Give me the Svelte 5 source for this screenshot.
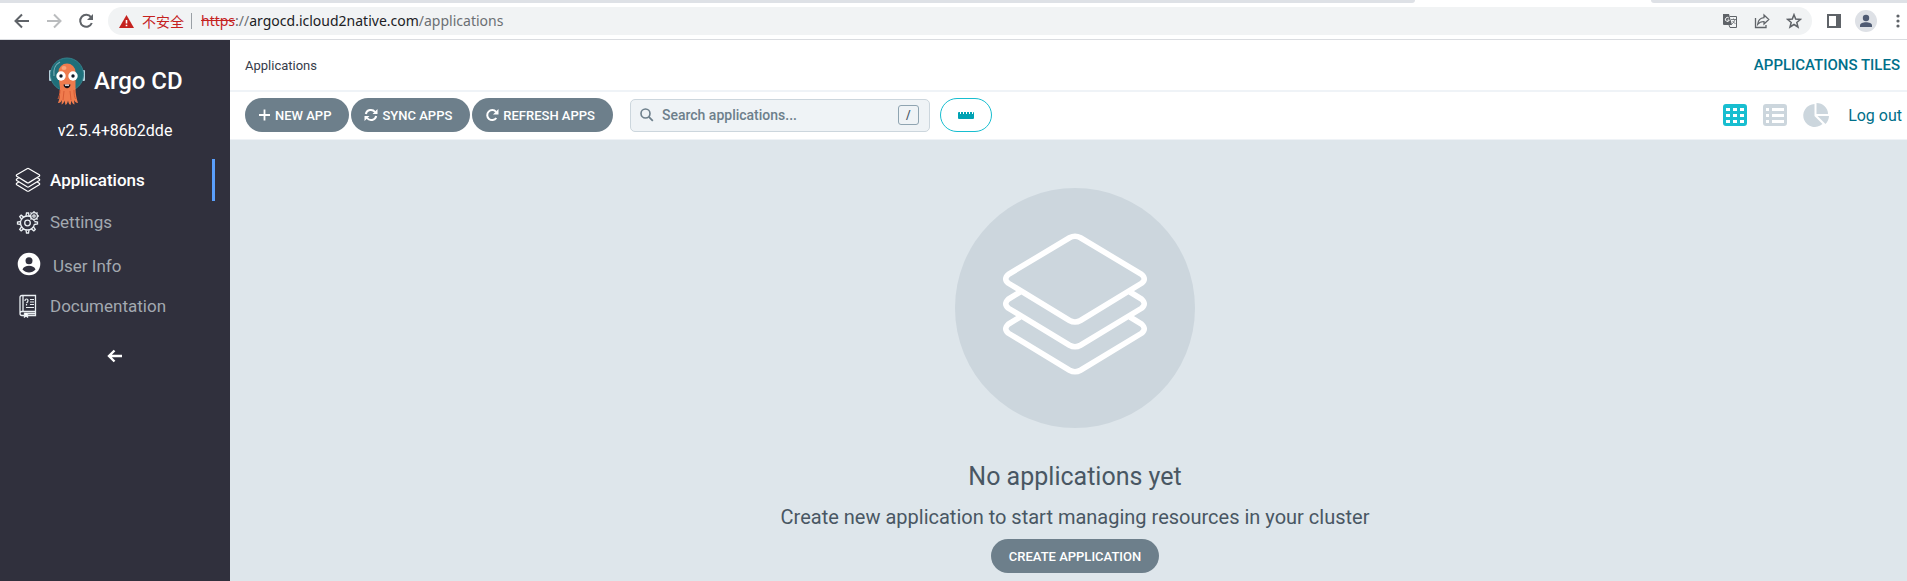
<script>
  const links = [
    { id: 'apps', label: 'Applications', active: true },
    { id: 'settings', label: 'Settings' },
    { id: 'user', label: 'User Info' },
    { id: 'docs', label: 'Documentation' }
  ];
  let query = $state('');
  const teeth = [0, 45, 90, 135, 180, 225, 270, 315];
</script>

{#snippet layers()}
  <path d="M139.500 67.800Q145 64.800 150.500 67.800L211.500 104.300Q217 109 211.500 113.300L150.500 150.500Q145 153.500 139.500 150.500L78.500 113.300Q73 109 78.500 104.300Z" />
  <path d="M90 122L78.500 129Q73 134 78.500 138.300L139.500 175.200Q145 178.200 150.500 175.200L211.500 138.300Q217 134 211.500 129L200 122" />
  <path d="M90 147L78.500 154Q73 159 78.500 163.300L139.500 200.200Q145 203.200 150.500 200.200L211.500 163.300Q217 159 211.500 154L200 147" />
{/snippet}

<div class="browser">
  <div class="tabs"><span class="tab-left"></span><span class="tab-right"></span></div>
  <div class="bar">
    <button class="nav-btn" aria-label="Back"><svg width="16" height="16" viewBox="0 0 16 16"><path d="M15 8H2M8 1.500 1.500 8 8 14.500" fill="none" stroke="#5f6368" stroke-width="2" /></svg></button>
    <button class="nav-btn" aria-label="Forward"><svg width="16" height="16" viewBox="0 0 16 16"><path d="M1 8h13M8 1.500 14.500 8 8 14.500" fill="none" stroke="#babcbe" stroke-width="2" /></svg></button>
    <button class="nav-btn" aria-label="Reload"><svg width="16" height="16" viewBox="0 0 16 16"><path d="M13 4.200A6 6 0 1 0 13.800 10" fill="none" stroke="#5f6368" stroke-width="2" /><path d="M15 1v6H9z" fill="#5f6368" /></svg></button>
    <div class="address">
      <svg width="15" height="13" viewBox="0 0 15 13"><path d="M7.500 0 15 13H0z" fill="#c5221f" /><path d="M6.700 5h1.600v3.500H6.700zM6.700 9.700h1.600v1.600H6.700z" fill="#fff" /></svg>
      <span class="unsafe">不安全</span>
      <span class="url"><s>https</s><span class="dim">://</span>argocd.icloud2native.com<span class="dim">/applications</span></span>
      <span class="tools">
        <button aria-label="Translate"><svg width="16" height="16" viewBox="0 0 16 16"><path d="M1 1h6l3 11H2a1 1 0 0 1-1-1z" fill="#5f6368" /><path d="M8 3.500h6.500v11H8L7 12" fill="none" stroke="#5f6368" /><path d="M6.800 5a2 2 0 1 0 .5 2H5.500" fill="none" stroke="#fff" /><path d="M9 6.500h5M11.500 5.500v1M13 6.500c-.5 2-2 3.500-3 4.500M10.500 8l3 3" fill="none" stroke="#5f6368" stroke-width=".8" /></svg></button>
        <button aria-label="Share"><svg width="16" height="16" viewBox="0 0 16 16"><path d="M1.500 5v9.500H12V12" fill="none" stroke="#5f6368" stroke-width="1.300" /><path d="M10 2v2.600C6 5 4 7.500 3.600 11.500 5.300 9.200 7 8.500 10 8.500V11l4.800-4.500z" fill="none" stroke="#5f6368" stroke-width="1.200" /></svg></button>
        <button aria-label="Bookmark"><svg width="16" height="16" viewBox="0 0 16 16"><path d="m8 1.700 1.700 4.400 4.700.3-3.600 3 1.200 4.600L8 11.500 4 14l1.200-4.600-3.600-3 4.700-.3z" fill="none" stroke="#5f6368" stroke-width="1.500" /></svg></button>
      </span>
    </div>
    <div class="chrome-end">
      <button aria-label="Side panel"><svg width="14" height="14" viewBox="0 0 14 14"><path d="M0 0h14v14H0zM2 2v10h7V2z" fill="#5f6368" fill-rule="evenodd" /></svg></button>
      <button aria-label="Profile"><svg width="22" height="22" viewBox="0 0 22 22"><circle cx="11" cy="11" r="11" fill="#dee1e6" /><circle cx="11" cy="8" r="3.200" fill="#4f5b73" /><path d="M5 17v-1.500c0-2 3-3.200 6-3.200s6 1.200 6 3.200V17z" fill="#4f5b73" /></svg></button>
      <button aria-label="Menu"><svg width="4" height="14" viewBox="0 0 4 14" fill="#5f6368"><circle cx="2" cy="2" r="1.600" /><circle cx="2" cy="7" r="1.600" /><circle cx="2" cy="12" r="1.600" /></svg></button>
    </div>
  </div>
</div>

<div class="app">
  <aside>
    <div class="brand">
      <svg width="38" height="50" viewBox="0 0 38 50">
        <rect x="1" y="14" width="3" height="11" rx="1" fill="#b5d0dc" /><rect x="34" y="14" width="3" height="11" rx="1" fill="#b5d0dc" />
        <circle cx="19" cy="18.500" r="16.500" fill="#1f6f7a" stroke="#35808b" />
        <path d="M6 20C5 13 8 8 12 6" fill="none" stroke="#75aab3" stroke-width="1.200" />
        <path d="M10.500 20V16a8.500 8.500 0 0 1 17 0v16c0 6 1 10 2.500 15-2 0-3-1-4-3l.5 4.500c-2-.5-2.500-2-3-4l-1 4.500c-1.700-1-2-2.500-2.500-4.500-.5 2-1 4-2.500 4.500l-1-4.500c-.5 2-1.500 3.500-3 4l.5-4.500c-1 2-2.500 3.500-4 3 2-5 2-9 2-15z" fill="#ef7b4d" />
        <path d="M12 34c0 4-1 7-2 9M16 35l-1 9M22 35l1 9M26 34c0 4 .5 7 1.500 9" fill="none" stroke="#d85c35" stroke-width="1" />
        <ellipse cx="16" cy="12" rx="2.500" ry="2" fill="#f9a47b" />
        <circle cx="13" cy="20" r="4.700" fill="#fff" /><circle cx="25" cy="20" r="4.700" fill="#fff" />
        <circle cx="13" cy="20" r="1.700" fill="#111a28" /><circle cx="25" cy="20" r="1.700" fill="#111a28" />
        <path d="M15.500 28.500h7c-.3 5-6.700 5-7 0z" fill="#16121b" /><path d="M17 28.500h4v1.300h-4z" fill="#fff" />
      </svg>
      <strong>Argo CD</strong>
    </div>
    <div class="version">v2.5.4+86b2dde</div>
    <nav>
      {#each links as link}
        <a href={'#' + link.id} class={link.id} class:active={link.active}>
          {#if link.id === 'apps'}
            <svg width="26" height="26" viewBox="68 58 154 154" fill="none" stroke="#fff" stroke-width="7">{@render layers()}</svg>
          {:else if link.id === 'settings'}
            <svg width="24" height="24" viewBox="0 0 24 24" fill="none" stroke="#e9eef2" stroke-width="1.300">
              <circle cx="11.500" cy="13" r="2.800" /><circle cx="11.500" cy="13" r="7" stroke-dasharray="36 8" stroke-dashoffset="-1" />
              {#each teeth.filter((a) => a !== 45) as angle}
                <path d="M10 6.200 10.500 3h2l.5 3.200" transform={`rotate(${angle} 11.500 13)`} />
              {/each}
              <circle cx="18" cy="6" r="3.400" /><circle cx="18" cy="6" r="1.200" />
              {#each teeth as angle}
                <path d="M18 2.600V1" transform={`rotate(${angle} 18 6)`} />
              {/each}
            </svg>
          {:else if link.id === 'user'}
            <svg width="24" height="24" viewBox="0 0 24 24"><circle cx="12" cy="12" r="11.300" fill="#fff" /><circle cx="12" cy="8.700" r="3.500" fill="#30303d" /><path d="M5.500 17.500c1.500-5 11.500-5 13 0-3.500 4-9.500 4-13 0z" fill="#30303d" /></svg>
          {:else}
            <svg width="24" height="24" viewBox="0 0 24 24" fill="none" stroke="#e9eef2" stroke-width="1.300"><path d="M4 19.500V3.500Q4 1.500 6 1.500h13.500v16H6q-2 0-2 2t2 2h13.500v-4M7 2v15M8 19.500h11" /><path d="M9 7q0-2 1.500-2t1.500 1.500T10.500 9M10.500 10v1.500M14 5.500h4M14 8h4M14 10.500h4M10 13.500h8" stroke-width="1.200" /><path d="M8.500 19v4l1.500-1 1.500 1v-4" fill="#fff" /></svg>
          {/if}
          <span>{link.label}</span>
        </a>
      {/each}
    </nav>
    <button class="collapse" aria-label="Collapse sidebar"><svg width="16" height="14" viewBox="0 0 16 14"><path d="M15 7H2M7.500 1.500 2 7l5.500 5.500" fill="none" stroke="#fff" stroke-width="2.400" /></svg></button>
  </aside>

  <main>
    <header><h1>Applications</h1><span class="view-name">APPLICATIONS TILES</span></header>
    <div class="toolbar">
      <div class="actions">
        <button class="pill"><svg width="13" height="14" viewBox="0 0 13 14"><path d="M6.500 1.500v11M1 7h11" stroke="#fff" stroke-width="1.800" /></svg>NEW APP</button>
        <button class="pill"><svg width="14" height="14" viewBox="0 0 14 14"><path d="M1.800 6A5.200 5.200 0 0 1 11 4M12.200 8A5.200 5.200 0 0 1 3 10" fill="none" stroke="#fff" stroke-width="2" /><path d="M13.500 1v5h-5zM.5 13V8h5z" fill="#fff" /></svg>SYNC APPS</button>
        <button class="pill"><svg width="14" height="14" viewBox="0 0 14 14"><path d="M11 3.800A5 5 0 1 0 11.300 10" fill="none" stroke="#fff" stroke-width="2" /><path d="M13.500 1v5.500H8z" fill="#fff" /></svg>REFRESH APPS</button>
      </div>
      <label class="search">
        <svg width="14" height="14" viewBox="0 0 14 14"><circle cx="5.500" cy="5.500" r="4.500" fill="none" stroke="#6d7f8b" stroke-width="1.600" /><path d="m8.800 8.800 4 4" stroke="#6d7f8b" stroke-width="1.800" /></svg>
        <input type="text" placeholder="Search applications..." aria-label="Search applications" bind:value={query} />
        <kbd>/</kbd>
      </label>
      <button class="ruler" aria-label="Toggle health bar"><svg width="16" height="7" viewBox="0 0 16 7"><path d="M1 0h1v2h1V0h2v2h1V0h2v2h1V0h2v2h1V0h2v2h1V0q1 0 1 1v5q0 1-1 1H1Q0 7 0 6V1q0-1 1-1z" fill="#00a2b3" /></svg></button>
      <div class="views">
        <button aria-label="Tiles"><svg width="24" height="22" viewBox="0 0 24 22"><path fill="#18bed0" fill-rule="evenodd" d="M3 0h18q3 0 3 3v16q0 3-3 3H3q-3 0-3-3V3q0-3 3-3zM3 4v3h4V4zM10 4v3h4V4zM17 4v3h4V4zM3 10v3h4v-3zM10 10v3h4v-3zM17 10v3h4v-3zM3 16v3h4v-3zM10 16v3h4v-3zM17 16v3h4v-3z" /></svg></button>
        <button aria-label="List"><svg width="24" height="22" viewBox="0 0 24 22"><path fill="#ccd6dd" fill-rule="evenodd" d="M3 0h18q3 0 3 3v16q0 3-3 3H3q-3 0-3-3V3q0-3 3-3zM3 4v3h3V4zM9 4v3h12V4zM3 10v3h3v-3zM9 10v3h12v-3zM3 16v3h3v-3zM9 16v3h12v-3z" /></svg></button>
        <button aria-label="Summary"><svg width="26" height="24" viewBox="0 0 26 24"><path fill="#ccd6dd" d="M11.500 1v12l8 8A11.500 11.500 0 1 1 11.500 1zM13.500 0A11.500 11 0 0 1 25 11H13.500zM14.500 13H26a12 12 0 0 1-3.500 8z" /></svg></button>
        <a href="#logout">Log out</a>
      </div>
    </div>
    <section class="empty">
      <div class="disc"><svg width="150" height="150" viewBox="70 63 150 150" fill="none" stroke="#fff" stroke-width="5.600">{@render layers()}</svg></div>
      <h2>No applications yet</h2>
      <p>Create new application to start managing resources in your cluster</p>
      <button class="pill create">CREATE APPLICATION</button>
    </section>
  </main>
</div>

<style>
  :global(body) { margin: 0; background: #dee6eb; }
  :global(#app) { min-height: 100vh; display: flex; flex-direction: column; font-family: Roboto, sans-serif; }
  button { font: inherit; padding: 0; border: 0; background: none; display: flex; align-items: center; justify-content: center; }
  svg { flex: none; display: block; }
  a { text-decoration: none; }

  .browser { background: #fff; border-bottom: 1px solid #dadce0; }
  .tabs { height: 3px; display: flex; justify-content: space-between; }
  .tab-left { width: 74.2%; background: #dee1e6; border-bottom-right-radius: 4px; }
  .tab-right { width: 13.4%; background: #dee1e6; border-bottom-left-radius: 4px; }
  .bar { display: flex; align-items: center; height: 36px; box-sizing: border-box; padding: 0 7px 0 14px; }
  .nav-btn { margin-right: 16px; }
  .address { flex: 1; display: flex; align-items: center; height: 28px; border-radius: 14px; background: #f1f3f4; padding: 0 10px 0 11px; margin-left: -2px; }
  .unsafe { color: #c5221f; font: 14px/20px "Noto Sans CJK SC", sans-serif; margin-left: 8px; padding-right: 7px; border-right: 1px solid #9aa0a6; height: 16px; display: flex; align-items: center; }
  .url { font: 14px/20px "Noto Sans", sans-serif; color: #202124; margin-left: 9px; }
  .url s { color: #c5221f; }
  .dim { color: #6b6f73; }
  .tools { display: flex; gap: 16px; margin-left: auto; }
  .chrome-end { display: flex; align-items: center; gap: 14px; margin-left: 15px; }
  .chrome-end button:last-child { margin-left: 5px; }

  .app { flex: 1; display: flex; }
  aside { flex: none; width: 230px; box-sizing: border-box; background: #30303d; color: #fff; padding-top: 16px; }
  .brand { display: flex; align-items: center; gap: 8px; padding-left: 48px; height: 50px; }
  .brand strong { font-size: 24px; line-height: 28px; font-weight: 500; }
  .version { text-align: center; font-size: 16px; line-height: 20px; margin: 15px 0 18px; }
  nav a { display: flex; align-items: center; height: 42px; margin-right: 15px; padding-left: 16px; box-sizing: border-box; border-right: 3px solid transparent; color: #a3a9b0; font-size: 17px; line-height: 20px; gap: 10px; }
  nav a.active { color: #fff; font-weight: 500; border-color: #5a9ffb; padding-left: 15px; gap: 9px; }
  nav a.user { gap: 13px; }
  nav a.user svg { margin-left: 1px; margin-right: -1px; }
  nav a.user span { padding-top: 4px; }
  .collapse { margin: 22px auto 0; }

  main { flex: 1; min-width: 0; display: flex; flex-direction: column; color: #495763; }
  header { display: flex; align-items: center; justify-content: space-between; height: 50px; background: #fff; padding: 0 7px 0 15px; border-bottom: 2px solid #eff3f7; }
  h1 { margin: 0; font-size: 13px; font-weight: 400; color: #363c4a; }
  .view-name { font-size: 15px; font-weight: 500; color: #006f8a; }
  .toolbar { display: flex; align-items: center; height: 48px; box-sizing: border-box; background: #fff; padding: 0 5px 1px 15px; border-bottom: 1px solid #eff3f7; }
  .actions { display: flex; gap: 2px; }
  .pill { height: 34px; border-radius: 17px; background: #6d7f8b; color: #fff; font-size: 13px; font-weight: 500; padding: 0 18px 0 13px; gap: 4px; white-space: nowrap; }
  .search { display: flex; align-items: center; width: 300px; height: 33px; box-sizing: border-box; border: 1px solid #ccd6dd; border-radius: 5px; background: #eff3f6; margin-left: 17px; padding: 0 10px 0 9px; }
  .search input { flex: 1; min-width: 0; border: 0; background: none; outline: 0; font: 500 14px/18px Roboto, sans-serif; padding: 0 0 0 8px; color: #363c4a; }
  .search input::placeholder { color: #6d7f8b; opacity: 1; }
  kbd { width: 19px; height: 18px; border: 1px solid #8fa4b1; border-radius: 3px; font: 500 12px/18px Roboto, sans-serif; text-align: center; color: #495763; }
  .ruler { margin-left: 10px; width: 52px; height: 34px; border: 1px solid #18bed0; border-radius: 17px; }
  .views { display: flex; align-items: center; gap: 16px; margin-left: auto; }
  .views a { font-size: 16px; color: #006f8a; margin-left: 3px; }
  .empty { flex: 1; display: flex; flex-direction: column; align-items: center; background: #dee6eb; padding: 48px 0 8px 13px; }
  .disc { width: 240px; height: 240px; border-radius: 50%; background: #ccd6dd; display: flex; align-items: center; justify-content: center; }
  h2 { margin: 33px 0 0; font-size: 25px; line-height: 32px; font-weight: 400; }
  p { margin: 12px 0 0; font-size: 20px; line-height: 24px; }
  .create { margin-top: 10px; padding: 0 18px; }
</style>
